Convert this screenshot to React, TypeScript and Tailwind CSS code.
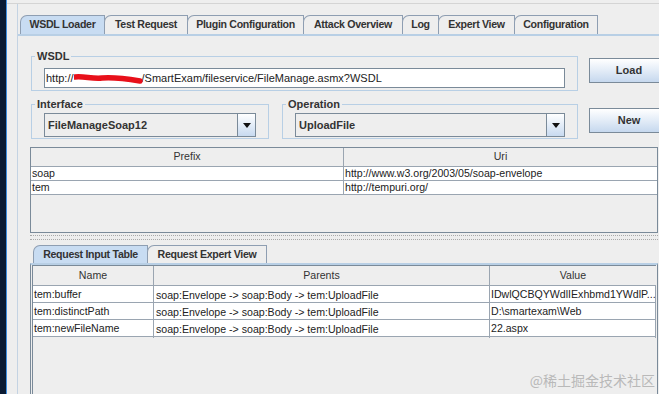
import clsx from "clsx";

const mainTabs = [
  { label: "WSDL Loader", w: "w-[85px]", selected: true },
  { label: "Test Request", w: "w-[84px]" },
  { label: "Plugin Configuration", w: "w-[117px]" },
  { label: "Attack Overview", w: "w-[100px]" },
  { label: "Log", w: "w-[37px]" },
  { label: "Expert View", w: "w-[77px]" },
  { label: "Configuration", w: "w-[84px]" },
];

const lowerTabs = [
  { label: "Request Input Table", w: "w-[115px]", selected: true },
  { label: "Request Expert View", w: "w-[120px]" },
];

const namespaces = [
  { prefix: "soap", uri: "http://www.w3.org/2003/05/soap-envelope" },
  { prefix: "tem", uri: "http://tempuri.org/" },
];

const inputs = [
  {
    name: "tem:buffer",
    parents: "soap:Envelope -> soap:Body -> tem:UploadFile",
    value: "IDwlQCBQYWdlIExhbmd1YWdlP...",
  },
  {
    name: "tem:distinctPath",
    parents: "soap:Envelope -> soap:Body -> tem:UploadFile",
    value: "D:\\smartexam\\Web",
  },
  {
    name: "tem:newFileName",
    parents: "soap:Envelope -> soap:Body -> tem:UploadFile",
    value: "22.aspx",
  },
];

function Tab({ label, w, selected }: { label: string; w: string; selected?: boolean }) {
  return (
    <div
      className={clsx(
        "-ml-px flex h-full items-center justify-center rounded-tl-[7px] border border-b-0 border-[#8e9eb2] text-[10.6px] font-bold tracking-[-0.3px] text-[#333]",
        w,
        selected ? "bg-[#c8dcf2]" : "bg-[#eeeeee]"
      )}
    >
      {label}
    </div>
  );
}

function Group({ title, className, children }: { title: string; className?: string; children: React.ReactNode }) {
  return (
    <fieldset className={clsx("border border-[#b8cfe5] p-0", className)}>
      <legend className="ml-[3px] px-[2px] text-[11px] font-bold leading-[13px] text-[#333]">{title}</legend>
      {children}
    </fieldset>
  );
}

function Combo({ value }: { value: string }) {
  return (
    <div className="flex h-[24px] border border-[#7a8a99] bg-[#eeeeee]">
      <div className="flex flex-1 items-center pl-[3px] text-[11px] font-bold text-[#333]">{value}</div>
      <div className="flex w-[18px] items-center justify-center border-l border-[#7a8a99] bg-gradient-to-b from-white to-[#c8daf0]">
        <svg width="8" height="5" viewBox="0 0 8 5">
          <path d="M0 0h8L4 5z" fill="#111" />
        </svg>
      </div>
    </div>
  );
}

function MetalButton({ label }: { label: string }) {
  return (
    <button className="flex w-[80px] items-center justify-center border border-[#7a8a99] bg-gradient-to-b from-white via-[#e3ecf7] to-[#c6d8ee] text-[11px] font-bold text-[#333]">
      {label}
    </button>
  );
}

export default function App() {
  return (
    <div className="relative flex h-[394px] w-[659px] overflow-hidden bg-[#eeeeee] font-['Liberation_Sans',Arial,sans-serif] text-[#222]">
      <div className="w-[6px] shrink-0 bg-[#0a1a33]" />
      <div className="w-px shrink-0 bg-[#3f8fe0]" />
      <div className="flex min-w-0 flex-1 flex-col">
        <div className="h-[4px] shrink-0 border-b border-[#d4d4d4]" />
        <div className="flex min-h-0 flex-1">
          <div className="w-[10px] shrink-0" />
          <div className="flex min-w-0 flex-1 flex-col border-l border-[#c4d3e3]">
            <div className="mt-[11px] flex h-[19px] shrink-0 pl-[3px]">
              {mainTabs.map((t) => (
                <Tab key={t.label} {...t} />
              ))}
            </div>
            <div className="flex min-h-0 flex-1 flex-col border-t-2 border-[#b8cfe5] pl-[12px]">
              <div className="flex">
                <div className="ml-px w-[547px] pt-[14px]">
                  <Group title="WSDL">
                    <div className="px-[12px] pb-[2px] pt-[5px]">
                      <div className="flex h-[20px] items-center border border-[#7a8a99] bg-white pl-px text-[11px]">
                        <span>http://</span>
                        <span className="relative inline-block h-full w-[68px]">
                          <svg className="absolute left-0 top-[3px]" width="70" height="14" viewBox="0 0 70 14">
                            <path d="M1 5 C10 4, 18 7, 28 6 S 48 6, 66 9" stroke="#e8101a" strokeWidth="5.5" fill="none" strokeLinecap="round" />
                          </svg>
                        </span>
                        <span>/SmartExam/fileservice/FileManage.asmx?WSDL</span>
                      </div>
                    </div>
                  </Group>
                  <div className="mt-[7px] flex gap-[13px]">
                    <Group title="Interface" className="w-[238px]">
                      <div className="px-[12px] pb-px pt-[2px]">
                        <Combo value="FileManageSoap12" />
                      </div>
                    </Group>
                    <Group title="Operation" className="w-[296px]">
                      <div className="px-[12px] pb-px pt-[2px]">
                        <Combo value="UploadFile" />
                      </div>
                    </Group>
                  </div>
                </div>
                <div className="ml-[11px] flex flex-col pt-[22px]">
                  <div className="flex h-[25px]">
                    <MetalButton label="Load" />
                  </div>
                  <div className="mt-[25px] flex h-[25px]">
                    <MetalButton label="New" />
                  </div>
                </div>
              </div>

              <div className="mt-[8px] h-[86px] w-[628px] shrink-0 border border-[#7a8a99]">
                <div className="grid h-[19px] grid-cols-[313px_1fr] border-b border-[#9aa5b1] text-[10.6px] text-[#333]">
                  <div className="flex items-center justify-center border-r border-[#9aa5b1]">Prefix</div>
                  <div className="flex items-center justify-center">Uri</div>
                </div>
                {namespaces.map((n) => (
                  <div key={n.prefix} className="grid h-[14px] grid-cols-[313px_1fr] border-b border-[#9aa5b1] bg-white text-[10.6px] leading-[13px]">
                    <div className="border-r border-[#9aa5b1] pl-px">{n.prefix}</div>
                    <div className="pl-px">{n.uri}</div>
                  </div>
                ))}
              </div>

              <div className="mt-[2px] h-[5px] w-[628px] shrink-0 border-y border-dotted border-[#a9a9a9]" />

              <div className="mt-[5px] flex h-[18px] shrink-0 pl-[4px]">
                {lowerTabs.map((t) => (
                  <Tab key={t.label} {...t} />
                ))}
              </div>
              <div className="flex min-h-0 w-[628px] flex-1 flex-col border-x border-t-2 border-x-[#7a8a99] border-t-[#b8cfe5] pl-px pr-px">
                <div className="flex-1 border-l border-t border-[#7a8a99]">
                  <div className="grid h-[20px] grid-cols-[121px_336px_1fr] border-b border-[#9aa5b1] text-[10.6px] text-[#333]">
                    <div className="flex items-center justify-center border-r border-[#9aa5b1]">Name</div>
                    <div className="flex items-center justify-center border-r border-[#9aa5b1]">Parents</div>
                    <div className="flex items-center justify-center">Value</div>
                  </div>
                  {inputs.map((r) => (
                    <div key={r.name} className="grid h-[17px] grid-cols-[121px_336px_1fr] border-b border-[#9aa5b1] bg-white text-[10.6px]">
                      <div className="flex items-center border-r border-[#9aa5b1] pl-px pb-px">{r.name}</div>
                      <div className="flex items-center border-r border-[#9aa5b1] pl-[2px] pt-[2px]">{r.parents}</div>
                      <div className="flex items-center overflow-hidden whitespace-nowrap border-r border-[#9aa5b1] pl-px pb-px">{r.value}</div>
                    </div>
                  ))}
                </div>
              </div>
            </div>
          </div>
        </div>
      </div>
      <div className="absolute bottom-[3px] right-[4px] font-['Noto_Sans_CJK_SC',sans-serif] text-[14px] text-[#b9b9b9]">
        @稀土掘金技术社区
      </div>
    </div>
  );
}
